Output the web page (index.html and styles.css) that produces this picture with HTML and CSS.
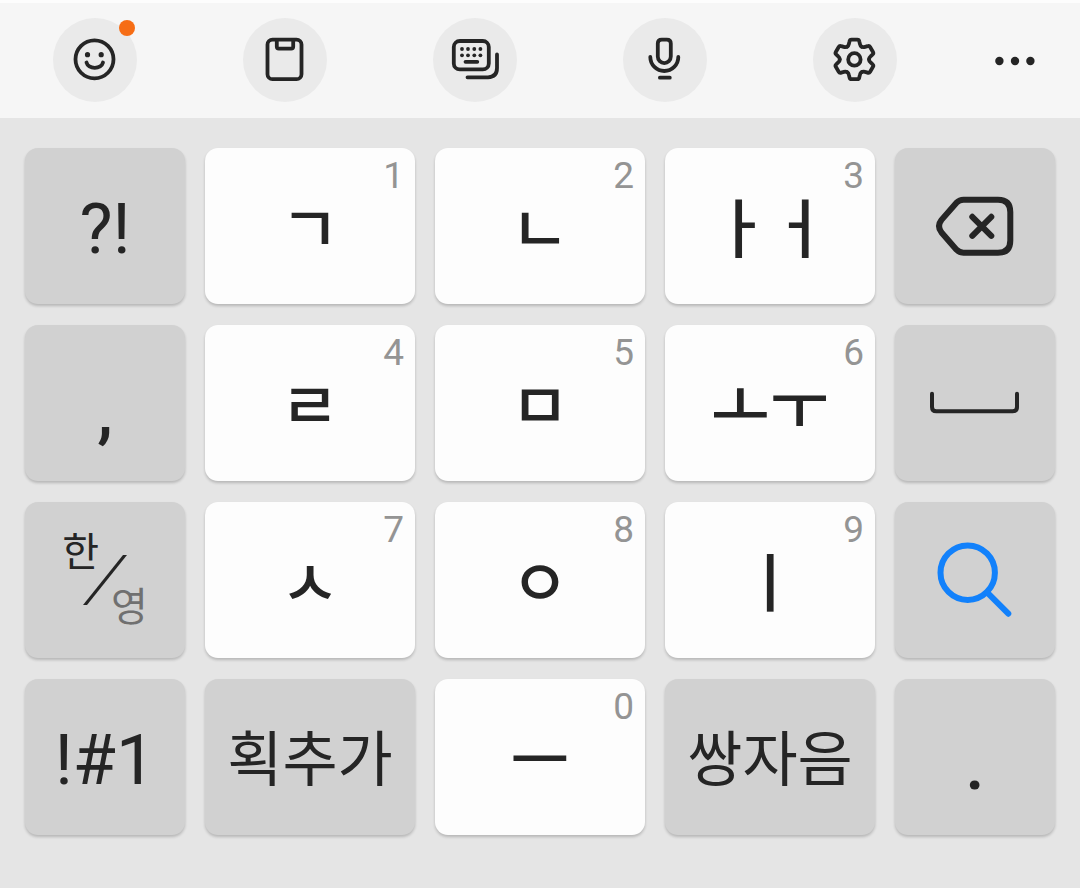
FILE: index.html
```html
<!DOCTYPE html>
<html lang="ko">
<head>
    <meta charset="UTF-8">
    <meta name="viewport" content="width=device-width, initial-scale=1.0">
    <title>Keyboard</title>
    <link rel="stylesheet" href="styles.css">
</head>
<body>
    <!-- Toolbar -->
    <div class="toolbar">
        <button type="button" class="tool" aria-label="이모지">
            <svg class="icon" viewBox="0 0 84 84">
                <circle cx="41.5" cy="41.3" r="19"/>
                <path d="M33.5 44.5a8.4 6.5 0 0 0 16.5 0"/>
                <circle class="fill" cx="34.5" cy="36.7" r="2.6"/>
                <circle class="fill" cx="48.2" cy="36.7" r="2.6"/>
            </svg>
            <span class="badge"></span>
        </button>
        <button type="button" class="tool" aria-label="클립보드">
            <svg class="icon" viewBox="0 0 84 84">
                <rect x="24.5" y="21.6" width="34" height="39.6" rx="5"/>
                <path d="M33.8 22v6.6q0 2 2 2h12.4q2 0 2-2V22"/>
            </svg>
        </button>
        <button type="button" class="tool" aria-label="키보드 모드">
            <svg class="icon" viewBox="0 0 84 84">
                <rect x="20.8" y="23" width="35" height="28.4" rx="6"/>
                <path d="M64 36.5V50q0 9-9 9.3H34.5M32.5 43.8h11.8"/>
                <g class="fill">
                    <circle cx="29" cy="31" r="1.9"/><circle cx="35" cy="31" r="1.9"/><circle cx="41.3" cy="31" r="1.9"/><circle cx="47.4" cy="31" r="1.9"/>
                    <circle cx="29" cy="37.3" r="1.9"/><circle cx="35" cy="37.3" r="1.9"/><circle cx="41.3" cy="37.3" r="1.9"/><circle cx="47.4" cy="37.3" r="1.9"/>
                </g>
            </svg>
        </button>
        <button type="button" class="tool" aria-label="음성 입력">
            <svg class="icon" viewBox="0 0 84 84">
                <path d="M38.8 21.6h5q4 0 4 4v13a6.5 6.5 0 0 1-13 0v-13q0-4 4-4z"/>
                <path d="M27.3 39a14 14 0 0 0 28 0M36.9 59.7h9.9"/>
            </svg>
        </button>
        <button type="button" class="tool" aria-label="설정">
            <svg class="icon" viewBox="-41.4 -41.4 84 84">
                <circle r="6.2"/>
                <path id="tooth" d="M-7.3-12.7Q-5.9-13.4-5.5-15.5L-4.9-18Q-4.6-19.8-2.9-19.8H2.9Q4.6-19.8 4.9-18L5.5-15.5Q5.9-13.4 7.3-12.7"/>
                <use href="#tooth" transform="rotate(60)"/>
                <use href="#tooth" transform="rotate(120)"/>
                <use href="#tooth" transform="rotate(180)"/>
                <use href="#tooth" transform="rotate(240)"/>
                <use href="#tooth" transform="rotate(300)"/>
            </svg>
        </button>
        <button type="button" class="tool tool-more" aria-label="더보기">
            <svg class="icon" viewBox="0 0 84 84">
                <g class="fill">
                    <circle cx="26.4" cy="43" r="4.2"/><circle cx="42" cy="43" r="4.2"/><circle cx="57.4" cy="43" r="4.2"/>
                </g>
            </svg>
        </button>
    </div>

    <!-- Keys -->
    <div class="keyboard">
        <button type="button" class="key key-fn">?!</button>
        <button type="button" class="key key-jamo">ㄱ<span class="hint">1</span></button>
        <button type="button" class="key key-jamo">ㄴ<span class="hint">2</span></button>
        <button type="button" class="key key-jamo">ㅏㅓ<span class="hint">3</span></button>
        <button type="button" class="key key-fn key-svg" aria-label="지우기">
            <svg class="key-icon" viewBox="0 0 160 156">
                <path d="M68.5 51.7H103q12.3 0 12.3 12.3V92.4q0 12.3-12.3 12.3H68.5q-4 0-7-3L46.5 84.5q-5-6.3 0-12.6L61.5 54.7q3-3 7-3z"/>
                <path d="M77.3 68.8l19 19M96.3 68.8l-19 19"/>
            </svg>
        </button>

        <button type="button" class="key key-fn key-punct">,</button>
        <button type="button" class="key key-jamo">ㄹ<span class="hint">4</span></button>
        <button type="button" class="key key-jamo">ㅁ<span class="hint">5</span></button>
        <button type="button" class="key key-jamo">ㅗㅜ<span class="hint">6</span></button>
        <button type="button" class="key key-fn key-svg" aria-label="스페이스">
            <svg class="key-icon key-space" viewBox="0 0 160 156">
                <path d="M37 68.7V82q0 4.3 4.3 4.3H117.7q4.3 0 4.3-4.3V68.7"/>
            </svg>
        </button>

        <button type="button" class="key key-fn key-lang">
            <span class="lang-on">한</span>
            <svg class="lang-slash" viewBox="0 0 44 50"><path d="M0 50L40 0H44L4 50z"/></svg>
            <span class="lang-off">영</span>
        </button>
        <button type="button" class="key key-jamo">ㅅ<span class="hint">7</span></button>
        <button type="button" class="key key-jamo">ㅇ<span class="hint">8</span></button>
        <button type="button" class="key key-jamo">ㅣ<span class="hint">9</span></button>
        <button type="button" class="key key-fn key-svg" aria-label="검색">
            <svg class="key-icon key-search" viewBox="0 0 160 156">
                <circle cx="72.7" cy="70.7" r="27.2"/>
                <path d="M92.3 90.7l21 21"/>
            </svg>
        </button>

        <button type="button" class="key key-fn">!#1</button>
        <button type="button" class="key key-fn key-word">획추가</button>
        <button type="button" class="key key-jamo">ㅡ<span class="hint">0</span></button>
        <button type="button" class="key key-fn key-word">쌍자음</button>
        <button type="button" class="key key-fn key-punct">.</button>
    </div>
</body>
</html>
```
FILE: styles.css
```css
body {
    margin: 0;
    background: #e5e5e5;
    color: #252525;
    font-family: Roboto, "Noto Sans CJK KR", sans-serif;
}

button {
    border: none;
    margin: 0;
    padding: 0;
    color: inherit;
    font-family: inherit;
    cursor: pointer;
}

/* Toolbar */
.toolbar {
    display: grid;
    grid-template-columns: repeat(5, 19fr) 13fr;
    justify-items: center;
    padding: 15px 0 16px;
    border-top: 3px solid #fdfdfd;
    background: #f6f6f6;
}

.tool {
    position: relative;
    width: 84px;
    height: 84px;
    border-radius: 50%;
    background: #eaeaea;
}

.tool-more {
    background: none;
}

.icon {
    display: block;
    width: 84px;
    height: 84px;
    fill: none;
    stroke: #252525;
    stroke-width: 3.8;
    stroke-linecap: round;
    stroke-linejoin: round;
}

.icon .fill {
    fill: #252525;
    stroke: none;
}

.badge {
    position: absolute;
    top: 2px;
    right: 2px;
    width: 16px;
    height: 16px;
    border-radius: 50%;
    background: #f66d15;
}

/* Keys */
.keyboard {
    display: grid;
    grid-template-columns: 16fr 21fr 21fr 21fr 16fr;
    grid-auto-rows: 156px;
    gap: 21px 20px;
    padding: 30px 25px 53px;
}

.key {
    position: relative;
    display: flex;
    align-items: center;
    justify-content: center;
    min-width: 0;
    border-radius: 13px;
    background: #fdfdfd;
    box-shadow: 0 2px 3px rgba(0, 0, 0, 0.2);
    font-size: 70px;
    line-height: 80px;
}

.key-fn {
    padding-top: 6px;
    background: #d1d1d1;
}

.key-svg {
    padding-top: 0;
}

.key-jamo,
.key-word {
    padding: 0 0 4px;
    font-family: "Noto Sans CJK KR", sans-serif;
    font-size: 60px;
}

.key-jamo {
    font-size: 64px;
    font-weight: 500;
}

.key-punct {
    padding-top: 16px;
    font-weight: 500;
}

.hint {
    position: absolute;
    top: 8px;
    right: 11px;
    color: #949494;
    font-family: Roboto, sans-serif;
    font-size: 37px;
    font-weight: 400;
    line-height: 40px;
}

.key-icon {
    width: 160px;
    height: 156px;
    fill: none;
    stroke: #252525;
    stroke-width: 6;
    stroke-linecap: round;
    stroke-linejoin: round;
}

.key-space {
    stroke-width: 4;
}

.key-search {
    stroke: #1281fb;
}

/* Language key */
.key-lang {
    padding: 0;
    font-family: "Noto Sans CJK KR", sans-serif;
    font-size: 40px;
    line-height: 40px;
}

.lang-on {
    align-self: flex-start;
    margin: 27px -16px 0 0;
}

.lang-off {
    align-self: flex-end;
    margin: 0 0 34px -16px;
    color: #707070;
}

.lang-slash {
    width: 44px;
    height: 50px;
    fill: #252525;
}
```
